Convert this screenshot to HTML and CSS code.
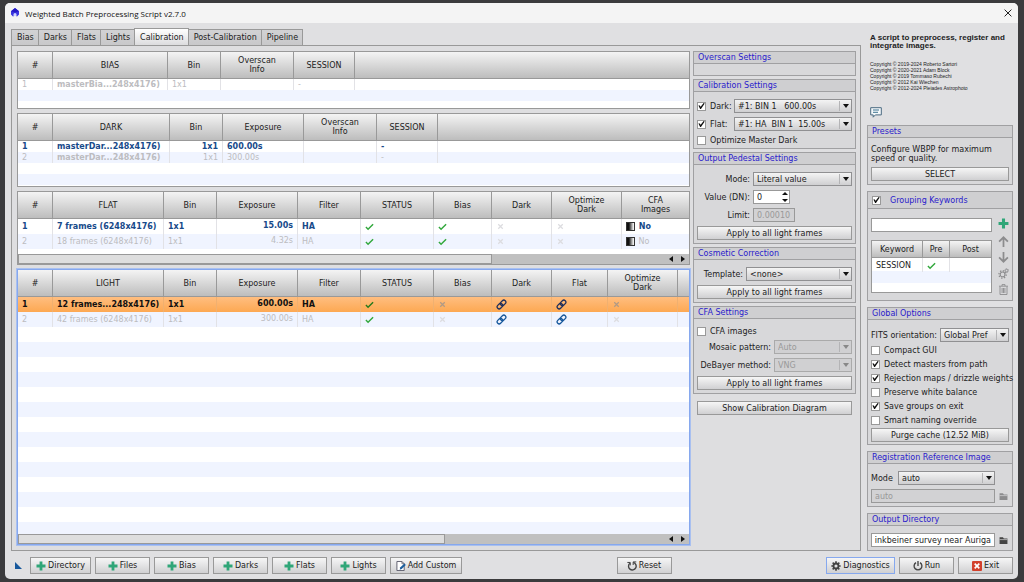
FILE: index.html
```html
<!DOCTYPE html>
<html lang="en">
<head>
    <meta charset="UTF-8">
    <meta name="viewport" content="width=device-width, initial-scale=1.0">
    <title>Weighted Batch Preprocessing Script v2.7.0</title>
    <link rel="stylesheet" href="styles.css">
</head>
<body>
    <!-- Shared icons -->
    <svg class="sprite" aria-hidden="true">
        <linearGradient id="ramp"><stop offset="0.3" stop-color="#111"/><stop offset="0.85" stop-color="#eee"/></linearGradient>
        <symbol id="plus" viewBox="0 0 10 10"><path d="M3.6 0.5h2.8v3.1h3.1v2.8H6.4v3.1H3.6V6.4H0.5V3.6h3.1z" fill="#2fa678"/></symbol>
        <symbol id="check" viewBox="0 0 10 10"><path d="M1 5.6 3.4 8 9 2.4" fill="none" stroke="currentColor" stroke-width="1.6"/></symbol>
        <symbol id="cross" viewBox="0 0 10 10"><path d="M2.5 2.5l5 5M7.5 2.5l-5 5" fill="none" stroke="currentColor" stroke-width="1.4"/></symbol>
        <symbol id="link" viewBox="0 0 12 12">
            <g fill="none" stroke="currentColor" stroke-width="1.4" transform="rotate(-45 6 6)">
                <rect x="0.2" y="3.8" width="6.6" height="4.4" rx="2.2"/>
                <rect x="5.2" y="3.8" width="6.6" height="4.4" rx="2.2"/>
            </g>
        </symbol>
        <symbol id="gray" viewBox="0 0 9 9">
            <rect x="0.5" y="0.5" width="8" height="8" fill="url(#ramp)" stroke="#333"/>
        </symbol>
        <symbol id="folder" viewBox="0 0 8 8"><path d="M0.5 1h3l0.8 1.2h3.2V7h-7z" fill="currentColor"/><path d="M0.5 3.2h7" stroke="#d8d8da" stroke-width="0.6"/></symbol>
        <symbol id="gear" viewBox="0 0 12 12">
            <circle cx="6" cy="6" r="3" fill="none" stroke="currentColor" stroke-width="2.2"/>
            <path d="M6 0.4v2.2M6 9.4v2.2M0.4 6h2.2M9.4 6h2.2M2 2l1.6 1.6M8.4 8.4 10 10M10 2 8.4 3.6M3.6 8.4 2 10" stroke="currentColor" stroke-width="2"/>
        </symbol>
    </svg>

    <div class="window">
        <header class="titlebar">
            <svg class="logo" viewBox="0 0 10 10"><path d="M5 0 9 3.2V6.5L6.8 8.8 5.8 6H4.2L3.2 8.8 1 6.5V3.2z" fill="#3a35e0"/><path d="M5 0 9 3.2 5 4.5 1 3.2z" fill="#2318c4"/><circle cx="5" cy="6.6" r="1.5" fill="#cfd8ff"/></svg>
            <h1>Weighted Batch Preprocessing Script v2.7.0</h1>
            <button class="close" aria-label="Close"><svg viewBox="0 0 8 8"><path d="M0.6 0.6l6.8 6.8M7.4 0.6L0.6 7.4" stroke="#222" fill="none"/></svg></button>
        </header>

        <main class="content">
            <section class="workspace">
                <nav class="tabs">
                    <button>Bias</button>
                    <button>Darks</button>
                    <button>Flats</button>
                    <button>Lights</button>
                    <button class="active">Calibration</button>
                    <button>Post-Calibration</button>
                    <button>Pipeline</button>
                </nav>

                <div class="panel">
                    <div class="tables">
                        <div class="list list-bias">
                            <table>
                                <colgroup><col class="w35"><col class="w115"><col class="w53"><col class="w73"><col class="w61"><col></colgroup>
                                <thead><tr><th>#</th><th>BIAS</th><th>Bin</th><th>Overscan<br>Info</th><th>SESSION</th><th></th></tr></thead>
                                <tbody>
                                    <tr class="off"><td>1</td><td class="strong">masterBia...248x4176)</td><td>1x1</td><td></td><td>-</td><td></td></tr>
                                </tbody>
                            </table>
                        </div>

                        <div class="list list-dark">
                            <table>
                                <colgroup><col class="w35"><col class="w117"><col class="w53"><col class="w81"><col class="w73"><col class="w61"><col></colgroup>
                                <thead><tr><th>#</th><th>DARK</th><th>Bin</th><th>Exposure</th><th>Overscan<br>Info</th><th>SESSION</th><th></th></tr></thead>
                                <tbody>
                                    <tr class="on"><td>1</td><td>masterDar...248x4176)</td><td class="right">1x1</td><td>600.00s</td><td></td><td>-</td><td></td></tr>
                                    <tr class="off"><td>2</td><td class="strong">masterDar...248x4176)</td><td class="right">1x1</td><td>300.00s</td><td></td><td>-</td><td></td></tr>
                                </tbody>
                            </table>
                        </div>

                        <div class="list list-flat tall">
                            <table>
                                <colgroup><col class="w35"><col class="w111"><col class="w53"><col class="w81"><col class="w63"><col class="w73"><col class="w58"><col class="w60"><col class="w70"><col></colgroup>
                                <thead><tr><th>#</th><th>FLAT</th><th>Bin</th><th>Exposure</th><th>Filter</th><th>STATUS</th><th>Bias</th><th>Dark</th><th>Optimize<br>Dark</th><th>CFA<br>Images</th></tr></thead>
                                <tbody>
                                    <tr class="on"><td>1</td><td>7 frames (6248x4176)</td><td>1x1</td><td class="right top">15.00s</td><td>HA</td>
                                        <td><svg class="ic green"><use href="#check"/></svg></td><td><svg class="ic green"><use href="#check"/></svg></td>
                                        <td><svg class="ic faint"><use href="#cross"/></svg></td><td><svg class="ic faint"><use href="#cross"/></svg></td>
                                        <td><svg class="ic cfa"><use href="#gray"/></svg> No</td></tr>
                                    <tr class="off"><td>2</td><td>18 frames (6248x4176)</td><td>1x1</td><td class="right top">4.32s</td><td>HA</td>
                                        <td><svg class="ic green"><use href="#check"/></svg></td><td><svg class="ic green"><use href="#check"/></svg></td>
                                        <td><svg class="ic faint"><use href="#cross"/></svg></td><td><svg class="ic faint"><use href="#cross"/></svg></td>
                                        <td><svg class="ic cfa"><use href="#gray"/></svg> No</td></tr>
                                </tbody>
                            </table>
                            <div class="scrollbar"><span class="thumb" style="width: 71%"></span><i class="arrow left"></i><i class="arrow next"></i></div>
                        </div>

                        <div class="list list-light tall focused">
                            <table>
                                <colgroup><col class="w35"><col class="w111"><col class="w53"><col class="w81"><col class="w63"><col class="w73"><col class="w58"><col class="w60"><col class="w56"><col class="w70"><col></colgroup>
                                <thead><tr><th>#</th><th>LIGHT</th><th>Bin</th><th>Exposure</th><th>Filter</th><th>STATUS</th><th>Bias</th><th>Dark</th><th>Flat</th><th>Optimize<br>Dark</th><th></th></tr></thead>
                                <tbody>
                                    <tr class="selected"><td>1</td><td>12 frames...248x4176)</td><td>1x1</td><td class="right top">600.00s</td><td>HA</td>
                                        <td><svg class="ic green"><use href="#check"/></svg></td><td><svg class="ic dim"><use href="#cross"/></svg></td>
                                        <td><svg class="ic chain"><use href="#link"/></svg></td><td><svg class="ic chain"><use href="#link"/></svg></td>
                                        <td><svg class="ic dim"><use href="#cross"/></svg></td><td></td></tr>
                                    <tr class="off"><td>2</td><td>42 frames (6248x4176)</td><td>1x1</td><td class="right top">300.00s</td><td>HA</td>
                                        <td><svg class="ic green"><use href="#check"/></svg></td><td><svg class="ic faint"><use href="#cross"/></svg></td>
                                        <td><svg class="ic chain"><use href="#link"/></svg></td><td><svg class="ic chain"><use href="#link"/></svg></td>
                                        <td><svg class="ic faint"><use href="#cross"/></svg></td><td></td></tr>
                                </tbody>
                            </table>
                            <div class="scrollbar"><span class="thumb" style="width: 64%"></span><i class="arrow left"></i><i class="arrow next"></i></div>
                        </div>
                    </div>

                    <div class="settings">
                        <section class="group">
                            <h2>Overscan Settings</h2>
                            <div class="group-body empty"></div>
                        </section>

                        <section class="group">
                            <h2>Calibration Settings</h2>
                            <div class="group-body">
                                <div class="row">
                                    <label class="check w-check"><input type="checkbox" checked>Dark:</label>
                                    <span class="select grow"><select aria-label="Dark"><option>#1: BIN 1 &nbsp; 600.00s</option></select></span>
                                </div>
                                <div class="row">
                                    <label class="check w-check"><input type="checkbox" checked>Flat:</label>
                                    <span class="select grow"><select aria-label="Flat"><option>#1: HA &nbsp;BIN 1 &nbsp;15.00s</option></select></span>
                                </div>
                                <label class="check"><input type="checkbox">Optimize Master Dark</label>
                            </div>
                        </section>

                        <section class="group">
                            <h2>Output Pedestal Settings</h2>
                            <div class="group-body">
                                <div class="row"><label class="w-label" for="mode">Mode:</label><span class="select grow"><select id="mode"><option>Literal value</option></select></span></div>
                                <div class="row"><label class="w-label" for="value">Value (DN):</label><span class="spin"><input type="text" id="value" value="0"><i class="up"></i><i class="down"></i></span></div>
                                <div class="row"><label class="w-label" for="limit">Limit:</label><input class="limit" type="text" id="limit" value="0.00010" disabled></div>
                                <button class="btn">Apply to all light frames</button>
                            </div>
                        </section>

                        <section class="group">
                            <h2>Cosmetic Correction</h2>
                            <div class="group-body">
                                <div class="row"><label class="w-template" for="template">Template:</label><span class="select grow"><select id="template"><option>&lt;none&gt;</option></select></span></div>
                                <button class="btn">Apply to all light frames</button>
                            </div>
                        </section>

                        <section class="group">
                            <h2>CFA Settings</h2>
                            <div class="group-body">
                                <label class="check"><input type="checkbox">CFA images</label>
                                <div class="row"><label class="w-mosaic" for="mosaic">Mosaic pattern:</label><span class="select grow off"><select id="mosaic" disabled><option>Auto</option></select></span></div>
                                <div class="row"><label class="w-mosaic" for="debayer">DeBayer method:</label><span class="select grow off"><select id="debayer" disabled><option>VNG</option></select></span></div>
                                <button class="btn">Apply to all light frames</button>
                            </div>
                        </section>

                        <button class="btn diagram">Show Calibration Diagram</button>
                    </div>
                </div>
            </section>

            <aside class="sidebar">
                <div class="about">
                    <p class="lead">A script to preprocess, register and integrate images.</p>
                    <p class="copy">Copyright © 2019-2024 Roberto Sartori<br>Copyright © 2020-2021 Adam Block<br>Copyright © 2019 Tommaso Rubechi<br>Copyright © 2012 Kai Wiechen<br>Copyright © 2012-2024 Pleiades Astrophoto</p>
                    <svg class="bubble" viewBox="0 0 12 11"><path d="M0.7 0.7h10.6v7.2H5.4L3.2 10.2V7.9H0.7z" fill="#f4f8fa" stroke="#4a6a80"/><path d="M3 3h6M3 5.3h5" stroke="#3c7390"/></svg>
                </div>

                <section class="group">
                    <h2>Presets</h2>
                    <div class="group-body">
                        <p>Configure WBPP for maximum speed or quality.</p>
                        <button class="btn">SELECT</button>
                    </div>
                </section>

                <section class="group">
                    <h2 class="big"><label class="check"><input type="checkbox" checked>Grouping Keywords</label></h2>
                    <div class="group-body keywords">
                        <div class="keyword-main">
                            <input type="text" aria-label="Keyword">
                            <div class="keyword-list">
                                <table>
                                    <colgroup><col class="w51"><col class="w27"><col></colgroup>
                                    <thead><tr><th>Keyword</th><th>Pre</th><th>Post</th></tr></thead>
                                    <tbody><tr><td>SESSION</td><td><svg class="ic green"><use href="#check"/></svg></td><td></td></tr></tbody>
                                </table>
                            </div>
                        </div>
                        <div class="keyword-tools">
                            <button aria-label="Add"><svg><use href="#plus"/></svg></button>
                            <button aria-label="Move up"><svg viewBox="0 0 10 10"><path d="M5 10V1.2M1 5.2l4-4 4 4" fill="none" stroke="currentColor" stroke-width="1.6"/></svg></button>
                            <button aria-label="Move down"><svg viewBox="0 0 10 10"><path d="M5 0v8.8M1 4.8l4 4 4-4" fill="none" stroke="currentColor" stroke-width="1.6"/></svg></button>
                            <button aria-label="Settings"><svg viewBox="0 0 12 12"><g fill="none" stroke="currentColor"><circle cx="5" cy="7" r="2.6" stroke-width="1.2"/><circle cx="5" cy="7" r="4" stroke-width="1.4" stroke-dasharray="1.5 1.6"/><circle cx="9.4" cy="2.8" r="1.4"/><circle cx="9.4" cy="2.8" r="2.2" stroke-width="0.8" stroke-dasharray="0.9 0.9"/></g></svg></button>
                            <button aria-label="Delete"><svg viewBox="0 0 10 11"><path d="M0.5 2.2h9M3.5 2V0.6h3V2M1.5 2.5v8h7v-8M3.6 4v5M5 4v5M6.4 4v5" fill="none" stroke="currentColor" stroke-width="0.9"/></svg></button>
                        </div>
                    </div>
                </section>

                <section class="group">
                    <h2>Global Options</h2>
                    <div class="group-body options">
                        <div class="row"><label for="fits">FITS orientation:</label><span class="select grow"><select id="fits"><option>Global Pref</option></select></span></div>
                        <label class="check"><input type="checkbox">Compact GUI</label>
                        <label class="check"><input type="checkbox" checked>Detect masters from path</label>
                        <label class="check"><input type="checkbox" checked>Rejection maps / drizzle weights</label>
                        <label class="check"><input type="checkbox">Preserve white balance</label>
                        <label class="check"><input type="checkbox" checked>Save groups on exit</label>
                        <label class="check"><input type="checkbox">Smart naming override</label>
                        <button class="btn">Purge cache (12.52 MiB)</button>
                    </div>
                </section>

                <section class="group">
                    <h2>Registration Reference Image</h2>
                    <div class="group-body">
                        <div class="row path"><label class="w-mode" for="refmode">Mode</label><span class="select grow"><select id="refmode"><option>auto</option></select></span></div>
                        <div class="row"><input class="grow" type="text" aria-label="Reference image" value="auto" disabled><button class="folder off" aria-label="Browse reference"><svg><use href="#folder"/></svg></button></div>
                    </div>
                </section>

                <section class="group">
                    <h2>Output Directory</h2>
                    <div class="group-body">
                        <div class="row"><input class="grow dir" type="text" aria-label="Output directory" value="Finkbeiner survey near Auriga"><button class="folder" aria-label="Browse output"><svg><use href="#folder"/></svg></button></div>
                    </div>
                </section>
            </aside>
        </main>

        <footer class="actions">
            <i class="corner"></i>
            <button class="btn wide"><svg><use href="#plus"/></svg>Directory</button>
            <button class="btn"><svg><use href="#plus"/></svg>Files</button>
            <button class="btn"><svg><use href="#plus"/></svg>Bias</button>
            <button class="btn"><svg><use href="#plus"/></svg>Darks</button>
            <button class="btn"><svg><use href="#plus"/></svg>Flats</button>
            <button class="btn"><svg><use href="#plus"/></svg>Lights</button>
            <button class="btn custom"><svg viewBox="0 0 11 11"><path d="M1 0.5h5.5L9 3v7.5H1z" fill="#fff" stroke="#556"/><path d="M6.5 0.5V3H9" fill="none" stroke="#556" stroke-width="0.8"/><path d="M4 9.5 4.8 7 9.3 2.8 10.8 4.3 6.3 8.7z" fill="#1d5f9e"/></svg>Add Custom</button>
            <span class="space"></span>
            <button class="btn"><svg viewBox="0 0 11 11"><path d="M3.2 2.4A4.2 4.2 0 1 0 7 1.6" fill="none" stroke="#444" stroke-width="1.5"/><path d="M0.4 1.6h3.2v3.2M10.2 1H6.8v3.4" fill="none" stroke="#444" stroke-width="1.1"/></svg>Reset</button>
            <span class="space"></span>
            <button class="btn diagnostics"><svg class="dark"><use href="#gear"/></svg>Diagnostics</button>
            <button class="btn"><svg viewBox="0 0 11 11"><path d="M3.3 1.8a4.3 4.3 0 1 0 4.4 0M5.5 0v5.6" fill="none" stroke="#444" stroke-width="1.5"/></svg>Run</button>
            <button class="btn"><svg viewBox="0 0 10 10"><rect width="10" height="10" rx="1" fill="#d2402c"/><path d="M2.7 2.7l4.6 4.6M7.3 2.7L2.7 7.3" stroke="#fff" stroke-width="1.7"/></svg>Exit</button>
        </footer>
    </div>
</body>
</html>
```
FILE: styles.css
```css
* {
    box-sizing: border-box;
    margin: 0;
    padding: 0;
}

body {
    min-height: 100vh;
    display: flex;
    padding: 3px 6px 3px 5px;
    background-color: #3b3b3d;
    color: #222;
    font-family: "DejaVu Sans", Verdana, sans-serif;
    font-size: 8px;
    line-height: 9px;
}

button, input, select {
    font: inherit;
    color: inherit;
}

.sprite {
    position: absolute;
    width: 0;
    height: 0;
}

.window {
    flex: 1;
    display: flex;
    flex-direction: column;
    min-width: 0;
    background: #e0e0e2;
    border-radius: 5px;
    overflow: hidden;
}

.titlebar {
    display: flex;
    align-items: center;
    gap: 5px;
    height: 20px;
    padding: 0 6px 0 5px;
    background: #f4f4f4;
}

.titlebar h1 {
    flex: 1;
    font: 8px "Open Sans", "Noto Sans", sans-serif;
    color: #111;
}

.logo {
    width: 10px;
    height: 10px;
}

.close {
    width: 8px;
    height: 8px;
    border: none;
    background: none;
}

.close svg {
    display: block;
}

.content {
    flex: 1;
    display: flex;
    gap: 6px;
    padding: 5px 5px 0 6px;
}

.workspace {
    flex: 1;
    min-width: 0;
    display: flex;
    flex-direction: column;
}

/* Tabs */
.tabs {
    display: flex;
    align-items: flex-end;
}

.tabs button {
    height: 16px;
    padding: 0 4px 0 5px;
    margin-right: -1px;
    border: 1px solid #999;
    border-bottom: none;
    background: linear-gradient(#d2d2d4, #c8c8ca);
}

.tabs .active {
    height: 17px;
    background: linear-gradient(#fff, #dcdcde);
}

.panel {
    flex: 1;
    display: flex;
    gap: 3px;
    padding: 5px 4px 5px 5px;
    border: 1px solid #999;
    background: #dedee0;
}

.tables {
    flex: 1;
    min-width: 0;
    display: flex;
    flex-direction: column;
    gap: 4px;
}

/* Frame lists */
.list {
    display: flex;
    flex-direction: column;
    border: 1px solid #999;
    background: repeating-linear-gradient(#fff 0 11px, #f0f4ff 11px 22px) 0 27px #fff;
}

.list-bias {
    height: 58px;
}

.list-dark {
    height: 74px;
}

.list-flat {
    height: 74px;
}

.list-light {
    flex: 1;
}

.tall {
    background-image: repeating-linear-gradient(#fff 0 15px, #f0f4ff 15px 30px);
}

.list-flat {
    background-size: 100% 30px;
    background-repeat: no-repeat;
}

.focused {
    border-color: #86a8ee;
    outline: 1px solid #a9c0f0;
}

table {
    width: 100%;
    table-layout: fixed;
    border-collapse: separate;
    border-spacing: 0;
}

th {
    height: 27px;
    font-weight: normal;
    background: linear-gradient(#f4f4f4, #d8d8d8 50%, #bdbdbd);
    border-right: 1px solid #999;
    border-bottom: 1px solid #999;
}

th:last-child {
    border-right: none;
}

td {
    height: 11px;
    padding: 0 4px;
    line-height: 9px;
    white-space: nowrap;
    border-right: 1px solid #e2e2e6;
}

td:last-child {
    border-right: none;
}

.tall td {
    height: 15px;
}

.w27 { width: 27px; }
.w35 { width: 35px; }
.w51 { width: 51px; }
.w53 { width: 53px; }
.w56 { width: 56px; }
.w58 { width: 58px; }
.w60 { width: 60px; }
.w61 { width: 61px; }
.w63 { width: 63px; }
.w70 { width: 70px; }
.w73 { width: 73px; }
.w81 { width: 81px; }
.w111 { width: 111px; }
.w115 { width: 115px; }
.w117 { width: 117px; }

.on {
    color: #174a8a;
    font-weight: bold;
}

.off {
    color: #bcbcc0;
}

.strong {
    font-weight: bold;
}

.right {
    text-align: right;
}

.top {
    padding-top: 2px;
    vertical-align: top;
}

.selected td {
    color: #111;
    font-weight: bold;
    background: linear-gradient(#ffbe80, #fda852);
    border-right-color: #f0b070;
}

.ic {
    display: inline-block;
    width: 9px;
    height: 9px;
    vertical-align: middle;
}

.cfa {
    margin-right: 1px;
}

.chain {
    width: 11px;
    height: 11px;
    color: #17589c;
}

.selected .chain {
    color: #20305c;
}

.green {
    color: #32a83c;
}

.selected .green {
    color: #267a1c;
}

.faint {
    color: #dcdce0;
}

.dim {
    color: #b09a86;
}

.scrollbar {
    display: flex;
    align-items: center;
    gap: 8px;
    height: 10px;
    margin-top: auto;
    padding-right: 4px;
    background: #c0c0c0;
}

.thumb {
    height: 10px;
    margin-right: auto;
    border: 1px solid #999;
    background: #dedede;
}

.arrow {
    border: 3px solid transparent;
}

.arrow.left {
    border-left: none;
    border-right: 4px solid #111;
}

.arrow.next {
    border-right: none;
    border-left: 4px solid #111;
}

/* Setting groups */
.settings {
    width: 163px;
    display: flex;
    flex-direction: column;
    gap: 3px;
}

.group {
    border: 1px solid #a0a0a2;
    background: #d8d8da;
}

.group h2 {
    height: 12px;
    padding-left: 4px;
    font-size: 8px;
    font-weight: normal;
    line-height: 11px;
    color: #2a20cc;
    background: #cfcfd1;
    border-bottom: 1px solid #a0a0a2;
}

.group .big {
    height: 17px;
    padding-top: 3px;
}

.big .check {
    gap: 9px;
}

.group-body {
    display: flex;
    flex-direction: column;
    gap: 4px;
    padding: 7px 3px 3px;
}

.group-body.empty {
    height: 11px;
    padding: 0;
}

.row {
    display: flex;
    align-items: center;
    gap: 3px;
}

.row label {
    white-space: nowrap;
}

.grow {
    flex: 1;
    min-width: 0;
}

.w-check {
    width: 34px;
}

.w-label {
    width: 53px;
    text-align: right;
}

.w-template {
    width: 46px;
    text-align: right;
}

.w-mosaic {
    width: 74px;
    text-align: right;
}

.w-mode {
    width: 24px;
}

.check {
    display: flex;
    align-items: center;
    gap: 4px;
    height: 10px;
    white-space: nowrap;
}

input[type="checkbox"] {
    appearance: none;
    flex: none;
    display: grid;
    place-items: center;
    width: 9px;
    height: 9px;
    border: 1px solid #999;
    background: #fff;
}

input[type="checkbox"]:checked::after {
    content: "";
    width: 7px;
    height: 7px;
    background: #111;
    clip-path: polygon(6% 44%, 20% 38%, 38% 62%, 80% 8%, 96% 16%, 42% 94%, 30% 94%);
}

input[type="text"] {
    height: 14px;
    padding: 0 3px;
    border: 1px solid #999;
    background: #fff;
}

input[type="text"]:disabled {
    color: #999;
    background: #d2d2d4;
}

.limit {
    width: 42px;
}

.dir {
    direction: rtl;
}

.select {
    position: relative;
    display: flex;
    height: 14px;
    border: 1px solid #909092;
    background: linear-gradient(#f4f4f4, #cfcfd1);
}

.select select {
    appearance: none;
    width: 100%;
    padding: 0 14px 0 3px;
    border: none;
    background: none;
}

.select::before {
    content: "";
    position: absolute;
    right: 11px;
    top: 1px;
    bottom: 1px;
    border-left: 1px solid #b4b4b6;
}

.select::after {
    content: "";
    position: absolute;
    right: 2px;
    top: 4px;
    border: 3px solid transparent;
    border-top: 4px solid #111;
    border-bottom: none;
}

.select.off {
    background: #d0d0d2;
    border-color: #aaa;
}

.select.off select {
    color: #999;
    opacity: 1;
}

.select.off::after {
    border-top-color: #888;
}

.spin {
    position: relative;
    width: 37px;
}

.spin input {
    display: block;
    width: 100%;
}

.spin i {
    position: absolute;
    right: 2px;
    border: 3px solid transparent;
}

.spin .up {
    top: 2px;
    border-top: none;
    border-bottom-color: #111;
}

.spin .down {
    bottom: 2px;
    border-bottom: none;
    border-top-color: #111;
}

.btn {
    display: flex;
    align-items: center;
    justify-content: center;
    gap: 2px;
    height: 14px;
    border: 1px solid #999;
    background: linear-gradient(#f6f6f6, #d0d0d2);
    white-space: nowrap;
}

.diagram {
    margin: 4px;
}

/* Right column */
.sidebar {
    width: 146px;
    display: flex;
    flex-direction: column;
    gap: 6px;
}

.about {
    display: flex;
    flex-direction: column;
    height: 91px;
    padding: 6px 2px 0 3px;
    font-family: "Liberation Sans", Arial, sans-serif;
}

.lead {
    font-weight: bold;
    line-height: 8px;
}

.copy {
    margin-top: 11px;
    font-size: 5px;
    line-height: 6px;
}

.bubble {
    width: 12px;
    height: 11px;
    margin-top: 16px;
}

.keywords {
    flex-direction: row;
    gap: 5px;
    padding-top: 9px;
    padding-bottom: 5px;
}

.keyword-main {
    flex: 1;
    min-width: 0;
    display: flex;
    flex-direction: column;
    gap: 8px;
}

.keyword-list {
    height: 53px;
    border: 1px solid #999;
    background: linear-gradient(#fff 30px, #f0f4ff 30px 42px, #fff 42px);
}

.keyword-list th {
    height: 17px;
}

.keyword-list td {
    height: 14px;
}

.keyword-tools {
    display: flex;
    flex-direction: column;
    align-items: center;
    gap: 5px;
    width: 12px;
    color: #8c8c8e;
}

.keyword-tools button {
    border: none;
    background: none;
}

.keyword-tools svg {
    display: block;
    width: 11px;
    height: 11px;
}

.keyword-tools button:first-child {
    margin-bottom: 2px;
}

.options {
    padding-top: 8px;
    padding-bottom: 2px;
}

.options .row {
    margin-bottom: -1px;
}

.options .btn {
    margin-top: -1px;
}

.path {
    padding-right: 14px;
}

.folder {
    width: 11px;
    height: 9px;
    border: none;
    background: none;
    color: #444;
}

.folder.off {
    color: #8c8c8e;
}

.folder svg {
    display: block;
    width: 9px;
    height: 9px;
    margin: 0 auto;
}

/* Bottom bar */
.actions {
    display: flex;
    align-items: center;
    gap: 4px;
    padding: 6px 5px 5px 10px;
}

.actions .btn {
    width: 55px;
    height: 17px;
}

.actions .wide {
    width: 61px;
}

.actions .custom {
    width: 72px;
}

.actions .diagnostics {
    width: 69px;
    border-color: #86a8ee;
}

.actions svg {
    flex: none;
    width: 10px;
    height: 10px;
}

.dark {
    color: #444;
}

.corner {
    margin-right: 4px;
    border-left: 7px solid #17589c;
    border-top: 7px solid transparent;
}

.space {
    flex: 1;
}
```
